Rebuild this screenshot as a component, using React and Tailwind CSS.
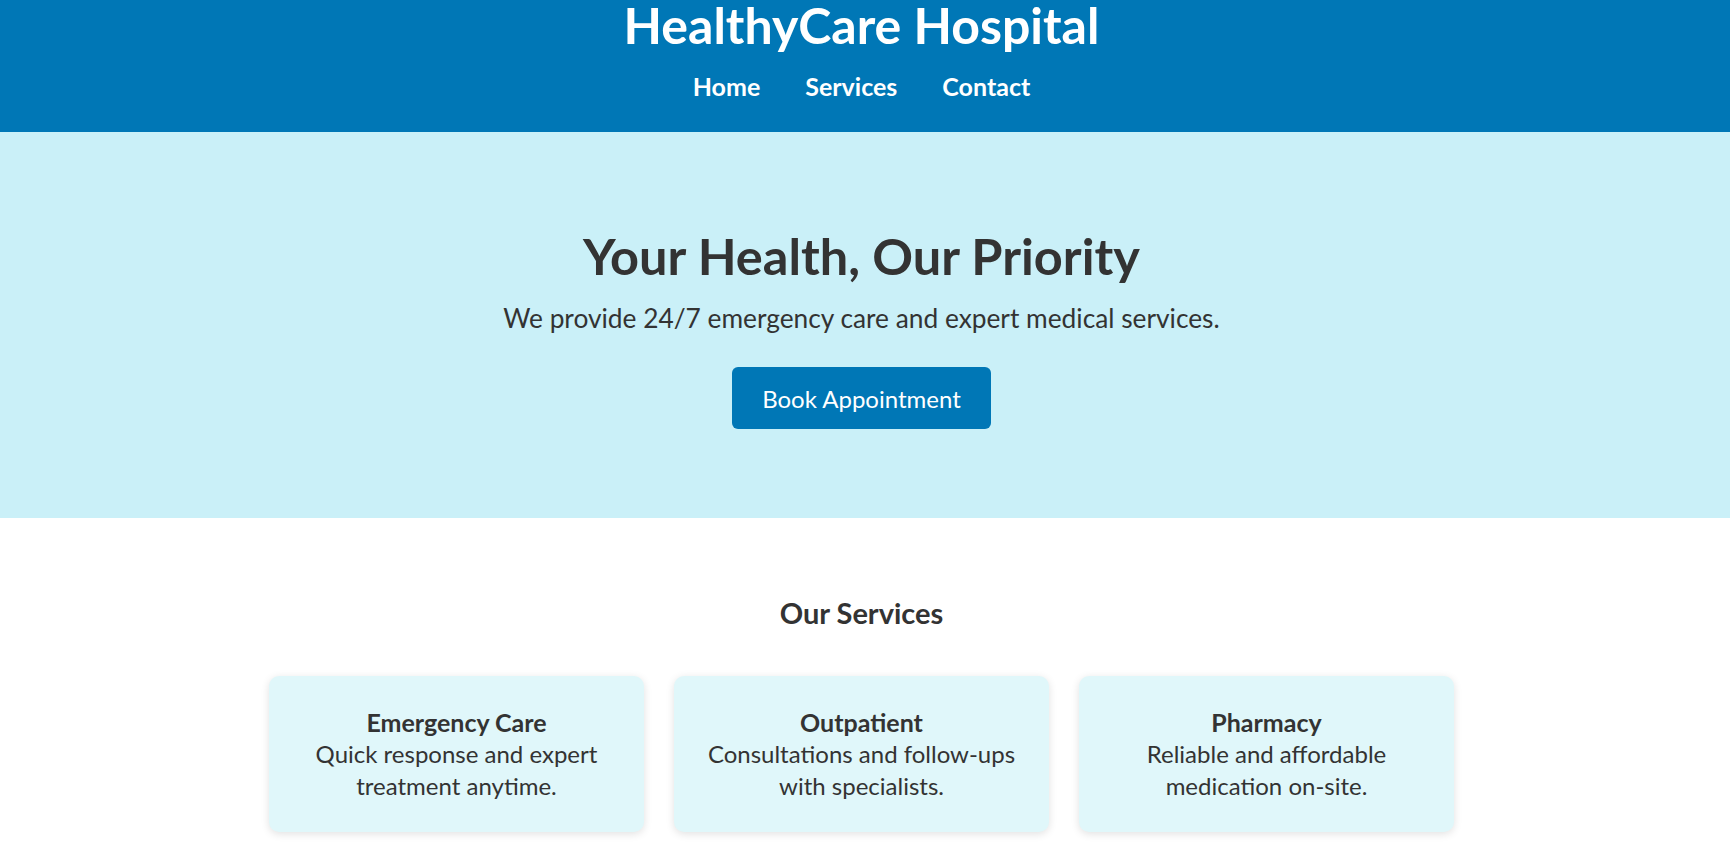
import React from 'react'

const services = [
  { title: 'Emergency Care', text: ['Quick response and expert', 'treatment anytime.'] },
  { title: 'Outpatient', text: ['Consultations and follow-ups', 'with specialists.'] },
  { title: 'Pharmacy', text: ['Reliable and affordable', 'medication on-site.'] },
]

export default function App() {
  return (
    <div className="min-h-screen bg-white font-['Lato',sans-serif] text-[#333]">
      {/* Header */}
      <header className="bg-[#0077b6] pr-[7px] pb-[31px] text-center text-white">
        <h1 className="mb-[21px] text-[50px] font-bold leading-none">HealthyCare Hospital</h1>
        <nav className="flex justify-center gap-[45px] text-[25px] font-bold leading-[30px]">
          <a href="#" className="hover:underline">Home</a>
          <a href="#" className="hover:underline">Services</a>
          <a href="#" className="hover:underline">Contact</a>
        </nav>
      </header>

      {/* Hero */}
      <section className="bg-[#caf0f8] pr-[7px] pt-[94px] pb-[89px] text-center">
        <h2 className="text-[50.5px] font-bold leading-[60px]">Your Health, Our Priority</h2>
        <p className="mt-[17px] text-[26.3px] leading-[31px]">
          We provide 24/7 emergency care and expert medical services.
        </p>
        <button className="mt-[33px] rounded-md bg-[#0077b6] px-[30px] pt-[17px] pb-[16px] text-[24px] leading-[29px] text-white">
          Book Appointment
        </button>
      </section>

      {/* Services */}
      <section className="pr-[7px] pt-[77px] pb-[14px] text-center">
        <h3 className="text-[29px] font-bold leading-[35px]">Our Services</h3>
        <div className="mt-[46px] flex justify-center gap-[30px]">
          {services.map((s) => (
            <div
              key={s.title}
              className="w-[375px] rounded-[10px] bg-[#e0f7fa] py-[30px] shadow-[0_2px_8px_rgba(0,0,0,0.12)]"
            >
              <h4 className="text-[25px] font-bold leading-[32px]">{s.title}</h4>
              <p className="text-[24px] leading-[32px]">
                {s.text[0]}
                <br />
                {s.text[1]}
              </p>
            </div>
          ))}
        </div>
      </section>
    </div>
  )
}
